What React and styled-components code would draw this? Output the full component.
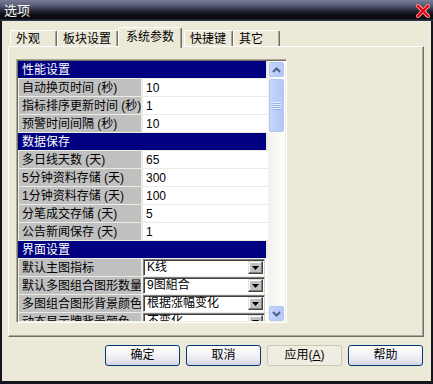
import React from 'react'
import styled, { createGlobalStyle } from 'styled-components'

const GlobalStyle = createGlobalStyle`
  html, body {
    margin: 0;
    padding: 0;
    background: #000;
  }
  body {
    font-family: "Liberation Sans", "Noto Sans CJK SC", sans-serif;
    font-size: 12px;
    color: #000;
  }
`

const sections = [
  {
    title: '性能设置',
    rows: [
      { label: '自动换页时间 (秒)', value: '10' },
      { label: '指标排序更新时间 (秒)', value: '1' },
      { label: '预警时间间隔 (秒)', value: '10' },
    ],
  },
  {
    title: '数据保存',
    rows: [
      { label: '多日线天数 (天)', value: '65' },
      { label: '5分钟资料存储 (天)', value: '300' },
      { label: '1分钟资料存储 (天)', value: '100' },
      { label: '分笔成交存储 (天)', value: '5' },
      { label: '公告新闻保存 (天)', value: '1' },
    ],
  },
  {
    title: '界面设置',
    rows: [
      { label: '默认主图指标', value: 'K线', combo: true },
      { label: '默认多图组合图形数量', value: '9图組合', combo: true },
      { label: '多图组合图形背景颜色', value: '根据涨幅变化', combo: true },
      { label: '动态显示牌背景颜色', value: '不变化', combo: true },
    ],
  },
]

const tabs = ['外观', '板块设置', '系统参数', '快捷键', '其它']

const Window = styled.div`
  width: 433px;
  height: 384px;
  box-sizing: border-box;
  display: flex;
  flex-direction: column;
  background: #15151d;
`

const TitleBar = styled.div`
  height: 21px;
  flex: none;
  display: flex;
  align-items: center;
  justify-content: space-between;
  padding: 0 3px 0 4px;
  background: linear-gradient(
    to bottom,
    #777b93 0%,
    #5a5e76 25%,
    #2c2e3c 48%,
    #0c0c12 70%,
    #0a0a0f 88%,
    #34405e 100%
  );
  color: #fff;
  font-size: 13px;
  line-height: 21px;
`

const Body = styled.div`
  flex: 1;
  margin: 0 2px 3px 2px;
  background: #ece9d8;
  padding: 6px 7px 0 6px;
  display: flex;
  flex-direction: column;
`

const TabStrip = styled.div`
  height: 21px;
  flex: none;
  display: flex;
  align-items: flex-end;
  padding-left: 2px;
  margin-bottom: -2px;
  position: relative;
  z-index: 1;
`

const Tab = styled.div`
  box-sizing: border-box;
  min-width: 47px;
  height: ${p => (p.$active ? 21 : 16)}px;
  margin-right: ${p => (p.$active ? 2 : 0)}px;
  margin-bottom: ${p => (p.$active ? 0 : 2)}px;
  padding: ${p => (p.$active ? '1px 7px 0 7px' : '1px 6px 0 5px')};
  border-top: 1px solid #fff;
  border-left: 1px solid #fff;
  border-right: 1px solid #716f64;
  border-top-left-radius: 2px;
  border-top-right-radius: 2px;
  box-shadow: inset -1px 0 #aca899;
  background: #ece9d8;
  line-height: ${p => (p.$active ? 17 : 14)}px;
  white-space: nowrap;
`

const Panel = styled.div`
  box-sizing: border-box;
  height: 291px;
  flex: none;
  border-top: 1px solid #fff;
  border-left: 1px solid #fff;
  border-right: 1px solid #716f64;
  border-bottom: 1px solid #716f64;
  box-shadow: inset -1px -1px #aca899;
  padding: 12px 0 0 7px;
`

const ListBox = styled.div`
  box-sizing: border-box;
  width: 271px;
  height: 264px;
  border-top: 1px solid #aca899;
  border-left: 1px solid #aca899;
  border-right: 1px solid #fff;
  border-bottom: 1px solid #fff;
  box-shadow: inset 1px 1px #716f64, inset -1px -1px #f1efe2;
  padding: 1px;
  display: flex;
  overflow: hidden;
`

const Rows = styled.div`
  width: 250px;
  flex: none;
  background: #ecebe2;
  overflow: hidden;
`

const Header = styled.div`
  height: 17px;
  margin: 0 2px 1px 0;
  padding-left: 4px;
  background: #000080;
  color: #fff;
  line-height: 18px;
`

const Row = styled.div`
  height: 17px;
  margin-bottom: 1px;
  display: flex;
  gap: 2px;
`

const Label = styled.div`
  width: 122px;
  flex: none;
  margin-left: 1px;
  padding-left: 3px;
  box-sizing: border-box;
  background: #c0c0c0;
  line-height: 18px;
  white-space: nowrap;
  overflow: hidden;
`

const Value = styled.div`
  flex: 1;
  background: #fff;
  padding-left: ${p => (p.$combo ? 0 : 3)}px;
  line-height: 19px;
  white-space: nowrap;
  overflow: hidden;
`

const Combo = styled.div`
  box-sizing: border-box;
  width: 122px;
  height: 17px;
  display: flex;
  align-items: center;
  border-top: 1px solid #808080;
  border-left: 1px solid #808080;
  border-right: 1px solid #d4d0c8;
  border-bottom: 1px solid #fff;
  box-shadow: inset 1px 1px #404040;
  padding: 1px 1px 1px 3px;
`

const ComboText = styled.span`
  flex: 1;
  line-height: 15px;
  overflow: hidden;
`

const DropButton = styled.div`
  box-sizing: border-box;
  width: 15px;
  height: 13px;
  background: #c0c0c0;
  border-top: 1px solid #dfdfdf;
  border-left: 1px solid #dfdfdf;
  border-right: 1px solid #404040;
  border-bottom: 1px solid #404040;
  box-shadow: inset -1px -1px #808080, inset 1px 1px #fff;
  display: flex;
  align-items: center;
  justify-content: center;
`

const ScrollTrack = styled.div`
  flex: 1;
  padding: 1px 1px 0 1px;
  background: linear-gradient(to right, #f3f1ec, #fefefe);
  display: flex;
  flex-direction: column;
  justify-content: space-between;
`

const ScrollButton = styled.div`
  box-sizing: border-box;
  width: 15px;
  height: ${p => p.$h || 15}px;
  margin-top: ${p => p.$gap || 0}px;
  border: 1px solid #b3c8f5;
  border-radius: 2px;
  background: linear-gradient(to right, #c5d5fd, #bccefa 50%, #b4c8f6);
  display: flex;
  align-items: center;
  justify-content: center;
`

const ScrollTop = styled.div`
  display: flex;
  flex-direction: column;
`

const ButtonRow = styled.div`
  display: flex;
  justify-content: flex-end;
  gap: 6px;
  margin-top: 8px;
  padding-right: 1px;
`

const Button = styled.div`
  box-sizing: border-box;
  width: 75px;
  height: 21px;
  border: 1px solid ${p => (p.$disabled ? '#c9c7ba' : '#003c74')};
  border-radius: 3px;
  background: ${p =>
    p.$disabled
      ? '#f0eee3'
      : 'linear-gradient(to bottom, #ffffff 0%, #f6f6f9 35%, #e6e6ef 75%, #d2d3e1 100%)'};
  text-align: center;
  line-height: 19px;
`

const Ul = styled.span`
  text-decoration: underline;
`

const CloseIcon = () => (
  <svg width="14" height="14" viewBox="0 0 14 14">
    <path d="M2 2 L12 12 M12 2 L2 12" stroke="#ffb0b0" strokeWidth="4" strokeLinecap="square" />
    <path d="M2 2 L12 12 M12 2 L2 12" stroke="#e80010" strokeWidth="2.4" strokeLinecap="square" />
  </svg>
)

const TriangleDown = () => (
  <svg width="7" height="4" viewBox="0 0 7 4">
    <path d="M0 0 H7 L3.5 4 Z" fill="#000" />
  </svg>
)

const Chevron = ({ up }) => (
  <svg width="9" height="6" viewBox="0 0 9 6">
    <path
      d={up ? 'M1 5 L4.5 1.5 L8 5' : 'M1 1 L4.5 4.5 L8 1'}
      stroke="#4d6185"
      strokeWidth="2"
      fill="none"
    />
  </svg>
)

const Grip = () => (
  <svg width="8" height="8" viewBox="0 0 8 8">
    {[0, 2, 4, 6].map(y => (
      <g key={y}>
        <rect x="0" y={y} width="8" height="1" fill="#eef3ff" />
        <rect x="0" y={y + 1} width="8" height="1" fill="#8caef0" />
      </g>
    ))}
  </svg>
)

export default function App() {
  return (
    <>
      <GlobalStyle />
      <Window>
        <TitleBar>
          <span>选项</span>
          <CloseIcon />
        </TitleBar>
        <Body>
          <TabStrip>
            {tabs.map(t => (
              <Tab key={t} $active={t === '系统参数'}>
                {t}
              </Tab>
            ))}
          </TabStrip>
          <Panel>
            <ListBox>
              <Rows>
                {sections.map(s => (
                  <React.Fragment key={s.title}>
                    <Header>{s.title}</Header>
                    {s.rows.map(r => (
                      <Row key={r.label}>
                        <Label>{r.label}</Label>
                        <Value $combo={r.combo}>
                          {r.combo ? (
                            <Combo>
                              <ComboText>{r.value}</ComboText>
                              <DropButton>
                                <TriangleDown />
                              </DropButton>
                            </Combo>
                          ) : (
                            r.value
                          )}
                        </Value>
                      </Row>
                    ))}
                  </React.Fragment>
                ))}
              </Rows>
              <ScrollTrack>
                <ScrollTop>
                  <ScrollButton>
                    <Chevron up />
                  </ScrollButton>
                  <ScrollButton $h={53} $gap={2}>
                    <Grip />
                  </ScrollButton>
                </ScrollTop>
                <ScrollButton>
                  <Chevron />
                </ScrollButton>
              </ScrollTrack>
            </ListBox>
          </Panel>
          <ButtonRow>
            <Button>确定</Button>
            <Button>取消</Button>
            <Button $disabled>
              应用(<Ul>A</Ul>)
            </Button>
            <Button>帮助</Button>
          </ButtonRow>
        </Body>
      </Window>
    </>
  )
}
